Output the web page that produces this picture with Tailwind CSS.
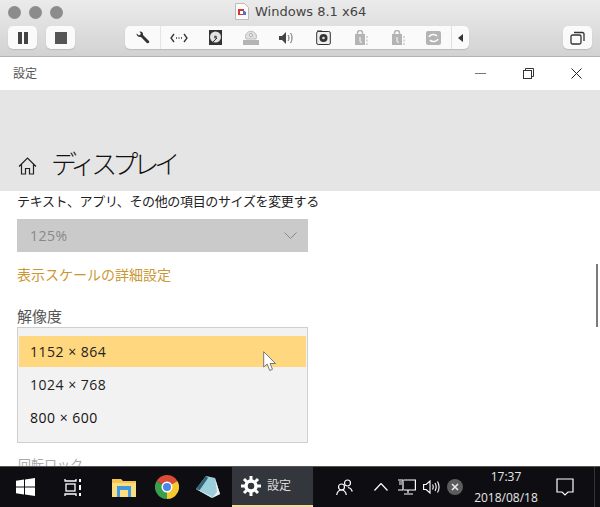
<!DOCTYPE html>
<html lang="ja">
<head>
<meta charset="UTF-8">
<title>Windows 8.1 x64</title>
<script src="https://cdn.jsdelivr.net/npm/@tailwindcss/browser@4"></script>
</head>
<body class="w-[600px] h-[507px] overflow-hidden bg-white relative font-['Open_Sans','Noto_Sans_CJK_JP',sans-serif]">

  <!-- mac toolbar -->
  <div class="h-[57px] bg-gradient-to-b from-[#ebebeb] to-[#d2d2d2] border-b border-[#b4b4b4] flex flex-col">
    <div class="h-[24px] relative flex items-center pl-[8px] gap-[8px]">
      <span class="w-[13px] h-[13px] rounded-full bg-[#8c8c8c]"></span>
      <span class="w-[13px] h-[13px] rounded-full bg-[#8c8c8c]"></span>
      <span class="w-[13px] h-[13px] rounded-full bg-[#8c8c8c]"></span>
      <div class="absolute left-[235px] top-[3px] flex items-center gap-[6px]">
        <svg width="14" height="17" viewBox="0 0 14 17"><path d="M.5.5h9l4 4v12H.5z" fill="#fafafa" stroke="#bbb"/><rect x="3" y="6" width="6" height="6" fill="#d33"/><rect x="5" y="8" width="3" height="3" fill="#fff"/><path d="M8 7l3 2v3H8z" fill="#47c"/></svg>
        <span class="font-['DejaVu_Sans'] text-[13px] leading-[17px] text-[#444]">Windows 8.1 x64</span>
      </div>
    </div>
    <div class="flex items-start pl-[8px] pt-[2px]">
      <div class="w-[29px] h-[23px] bg-[#fafafa] rounded-[5px] shadow-[0_1px_1px_#bbb] flex items-center justify-center gap-[2px]">
        <span class="w-[4px] h-[12px] bg-[#444]"></span><span class="w-[4px] h-[12px] bg-[#444]"></span>
      </div>
      <div class="ml-[9px] w-[29px] h-[23px] bg-[#fafafa] rounded-[5px] shadow-[0_1px_1px_#bbb] flex items-center justify-center">
        <span class="w-[12px] h-[12px] bg-[#555]"></span>
      </div>
      <div class="ml-[50px] w-[344px] h-[23px] bg-[#fafafa] rounded-[5px] shadow-[0_1px_1px_#bbb] flex items-center">
        <div class="w-[36px] h-full border-r border-[#e4e4e4] flex items-center justify-center">
          <svg width="16" height="16" viewBox="0 0 16 16"><path d="M1.500 3.500 4 5.500 6 4 4.500 1.500C6.500 1 8.500 2.500 8 5l6 6c1 1.500-.8 3-2.200 2L6 7C3.500 7.500 1.500 6 1.500 3.500z" fill="#333"/></svg>
        </div>
        <div class="w-[36px] flex items-center justify-center">
          <svg width="18" height="10" viewBox="0 0 18 10" fill="none" stroke="#333" stroke-width="1.300"><path d="M4 1 1 5l3 4M14 1l3 4-3 4"/><path d="M6 5h1M8.500 5h1M11 5h1"/></svg>
        </div>
        <div class="w-[36px] flex items-center justify-center">
          <svg width="13" height="15" viewBox="0 0 13 15"><rect width="13" height="15" fill="#333"/><circle cx="6.500" cy="7" r="5.500" fill="#e2e2e2"/><circle cx="6.500" cy="7" r="1.500" fill="#555"/><path d="m3 13 5-5" stroke="#333"/></svg>
        </div>
        <div class="w-[36px] flex items-center justify-center">
          <svg width="16" height="15" viewBox="0 0 16 15"><path d="M3 9a5.500 5.500 0 1 1 10 0z" fill="#e0e0e0" stroke="#bbb"/><circle cx="8" cy="5" r="1.500" fill="#fff" stroke="#aaa"/><rect y="10" width="16" height="5" fill="#b4b4b4"/></svg>
        </div>
        <div class="w-[36px] flex items-center justify-center">
          <svg width="16" height="14" viewBox="0 0 16 14"><path d="M0 5h3l4-4v12L3 9H0z" fill="#444"/><path d="M9 4c1.300 1.800 1.300 4.200 0 6M11.500 2c2 3 2 7 0 10" fill="none" stroke="#666"/></svg>
        </div>
        <div class="w-[37px] flex items-center justify-center">
          <svg width="15" height="15" viewBox="0 0 15 15"><rect x=".7" y="1.500" width="13.600" height="13" rx="1.500" fill="#eee" stroke="#333"/><path d="M1 1h5" stroke="#333"/><circle cx="7.500" cy="8" r="4" fill="#333"/><circle cx="7.500" cy="8" r="1.300" fill="#ddd"/></svg>
        </div>
        <div class="w-[36px] flex items-center justify-center pl-[3px]">
          <svg width="13" height="15" viewBox="0 0 13 15"><path d="M2.500 5V3a2.500 2.500 0 0 1 5 0v2" fill="none" stroke="#b4b4b4" stroke-width="1.500"/><rect y="4" width="10" height="11" fill="#b4b4b4"/><path d="M5 7v4c0 1.500 1 1.500 2 1" stroke="#fff" fill="none"/><path d="M12 6v2M12 9.500v2M12 13v2" stroke="#b4b4b4"/></svg>
        </div>
        <div class="w-[37px] flex items-center justify-center pl-[3px]">
          <svg width="13" height="15" viewBox="0 0 13 15"><path d="M2.500 5V3a2.500 2.500 0 0 1 5 0v2" fill="none" stroke="#b4b4b4" stroke-width="1.500"/><rect y="4" width="10" height="11" fill="#b4b4b4"/><path d="M5 7v4c0 1.500 1 1.500 2 1" stroke="#fff" fill="none"/><path d="M12 6v2M12 9.500v2M12 13v2" stroke="#b4b4b4"/></svg>
        </div>
        <div class="w-[36px] flex items-center justify-center">
          <svg width="15" height="14" viewBox="0 0 15 14"><rect width="15" height="14" rx="2" fill="#b4b4b4"/><path d="M3 6c1-3 6-3.500 8-1M12 8c-1 3-6 3.500-8 1" fill="none" stroke="#fff" stroke-width="1.500"/></svg>
        </div>
        <div class="flex-1 h-full border-l border-[#e0e0e0] flex items-center justify-center">
          <span class="w-0 h-0 border-y-[4px] border-y-transparent border-r-[5px] border-r-[#333]"></span>
        </div>
      </div>
      <div class="ml-[94px] w-[29px] h-[23px] bg-[#fafafa] rounded-[5px] shadow-[0_1px_1px_#bbb] flex items-center justify-center">
        <svg width="15" height="14" viewBox="0 0 15 14" fill="none" stroke="#333" stroke-width="1.300"><rect x="1" y="4" width="10" height="9" rx="1.500"/><path d="M4 1.500h8.500a1.500 1.500 0 0 1 1.500 1.500v7"/></svg>
      </div>
    </div>
  </div>

  <!-- settings window title -->
  <div class="h-[33px] bg-white flex items-center">
    <span class="ml-[13px] text-[12px] text-[#555]">設定</span>
    <div class="ml-auto flex items-center">
      <span class="w-[11px] h-px bg-[#777] mr-[37px]"></span>
      <svg class="mr-[37px]" width="11" height="11" viewBox="0 0 11 11" fill="none" stroke="#333"><rect x=".5" y="2.500" width="8" height="8"/><path d="M2.500 2.500v-2h8v8h-2"/></svg>
      <svg class="mr-[18px]" width="11" height="11" viewBox="0 0 11 11" fill="none" stroke="#222"><path d="m.5.500 10 10M10.500.500l-10 10"/></svg>
    </div>
  </div>

  <!-- header -->
  <div class="h-[101px] bg-[#e5e5e5] flex items-end pl-[18px]">
    <svg class="mb-[16px]" width="19" height="18" viewBox="0 0 19 18" fill="none" stroke="#222" stroke-width="1.200"><path d="M1 9.500 9.500 1 18 9.500M3.500 7.500V17h4v-5.500h4V17h4V7.500"/></svg>
    <h1 class="ml-[14px] mb-[9px] text-[26px] leading-[36px] font-light tracking-[-5px] text-[#111]">ディスプレイ</h1>
  </div>

  <!-- content -->
  <div class="h-[275px] overflow-hidden pl-[17px]">
    <p class="mt-px text-[13px] leading-[18px] text-[#222] whitespace-nowrap tracking-[-.35px]">テキスト、アプリ、その他の項目のサイズを変更する</p>
    <div class="mt-[9px] w-[291px] h-[33px] bg-[#cacaca] flex items-center pl-[13px] pr-[11px]">
      <span class="text-[14px] tracking-[.5px] text-[#888]">125%</span>
      <svg class="ml-auto" width="13" height="7" viewBox="0 0 13 7" fill="none" stroke="#888"><path d="m.5.500 6 6 6-6"/></svg>
    </div>
    <a class="block mt-[13px] text-[14px] leading-[20px] text-[#cc9733]">表示スケールの詳細設定</a>
    <p class="mt-[21px] text-[15px] leading-[20px] text-[#555]">解像度</p>
    <div class="mt-[1px] w-[291px] h-[116px] bg-[#f2f2f2] border border-[#cfcfcf] pt-[8px] px-[1px] text-[14px] tracking-[.5px] text-[#222]">
      <div class="h-[31px] bg-[#ffd77e] pl-[11px] leading-[31px]">1152 × 864</div>
      <div class="h-[35px] pl-[11px] leading-[35px]">1024 × 768</div>
      <div class="h-[32px] pl-[11px] leading-[32px] text-[#111]">800 × 600</div>
    </div>
    <p class="mt-[11px] ml-px text-[13px] leading-[20px] text-[#aaa]">回転ロック</p>
  </div>

  <!-- taskbar -->
  <div class="h-[41px] bg-[#0e0e12] border-t border-[#555] flex items-stretch text-white">
    <div class="w-[50px] flex items-center justify-center">
      <svg width="19" height="18" viewBox="0 0 19 18" fill="#fff"><path d="M0 2.700 8 1.500V8.500H0zM9 1.400 19 0v8.500H9zM0 9.500h8v7L0 15.300zM9 9.500h10V18L9 16.600z"/></svg>
    </div>
    <div class="w-[48px] flex items-center justify-center">
      <svg width="20" height="17" viewBox="0 0 20 17" fill="none" stroke="#fff" stroke-width="1.300"><path d="M1 0v2h11V0M1 17v-2h11v2"/><rect x="2" y="5" width="9" height="7"/><path d="M16 0v3M16 6v5M16 14v3" stroke-width="2"/></svg>
    </div>
    <div class="w-[52px] flex items-center justify-center">
      <svg width="24" height="20" viewBox="0 0 24 20"><path d="M0 2h9l2 2h13v16H0z" fill="#f4c453"/><path d="M0 6h24v14H0z" fill="#fbdc7e"/><path d="M5 9h14v11h-3v-7H8v7H5z" fill="#3d9ae0"/></svg>
    </div>
    <div class="w-[34px] flex items-center justify-center">
      <svg width="24" height="24" viewBox="0 0 24 24"><path d="M12 12 1.600 6A12 12 0 0 1 22.400 6z" fill="#dc4a38"/><path d="M12 12 22.400 6A12 12 0 0 1 12 24z" fill="#f7c930"/><path d="M12 12 12 24A12 12 0 0 1 1.600 6z" fill="#3a9e4c"/><circle cx="12" cy="12" r="5.500" fill="#fff"/><circle cx="12" cy="12" r="4" fill="#4a86e8"/></svg>
    </div>
    <div class="w-[48px] flex items-center justify-center">
      <svg width="24" height="23" viewBox="0 0 24 23"><path d="M10 0 19 2 24 18 16 22 0 13z" fill="#9ccfdc"/><path d="M10 0 0 13 3 15 12 2z" fill="#2f6474"/><path d="M19 2 24 18 16 22 21 16z" fill="#eeeeee"/><path d="M0 13 16 22 15 20 3 14z" fill="#d8e8ec"/></svg>
    </div>
    <div class="w-[81px] bg-[#33363c] border-b-[2px] border-[#f5d9a0] flex items-center pl-[9px] gap-[6px]">
      <svg width="20" height="20" viewBox="0 0 20 20" fill="none" stroke="#fff" stroke-width="3.500"><circle cx="10" cy="10" r="5"/><path d="M10 0v4M10 16v4M0 10h4M16 10h4M3 3l2.500 2.500M14.500 14.500 17 17M17 3l-2.500 2.500M5.500 14.500 3 17" stroke-width="3"/></svg>
      <span class="text-[12px] text-[#ddd]">設定</span>
    </div>
    <div class="ml-[23px] flex items-center">
      <svg width="17" height="17" viewBox="0 0 17 17" fill="none" stroke="#fff" stroke-width="1.200"><circle cx="5.500" cy="8" r="3"/><path d="M.7 16c.5-3 2.500-5 4.800-5s4.300 2 4.800 5"/><circle cx="11.500" cy="4" r="3"/><path d="M12 8.500c2 .3 3.500 1.500 4.300 4"/></svg>
    </div>
    <div class="ml-[21px] flex items-center">
      <svg width="14" height="8" viewBox="0 0 14 8" fill="none" stroke="#fff" stroke-width="1.200"><path d="m.5 7.500 6.500-7 6.500 7"/></svg>
    </div>
    <div class="ml-[10px] flex items-center">
      <svg width="18" height="16" viewBox="0 0 18 16" fill="none" stroke="#fff" stroke-width="1.200"><path d="M6 1h11.400v10H6M10 11v3M6 15h9M0 1h5v10H0M1 3h3M1 5h3"/></svg>
    </div>
    <div class="ml-[7px] flex items-center">
      <svg width="17" height="14" viewBox="0 0 17 14" fill="none" stroke="#fff" stroke-width="1.100"><path d="M.6 4.500h2.500L7 1v12L3.100 9.500H.6zM9.500 4.500c.9 1.500.9 3.500 0 5M12 3c1.500 2.500 1.500 5.500 0 8M14.500 1.500c2 3.500 2 7.500 0 11"/></svg>
    </div>
    <div class="ml-[7px] flex items-center">
      <svg width="16" height="16" viewBox="0 0 16 16"><circle cx="8" cy="8" r="8" fill="#5c5c5c"/><path d="m5 5 6 6M11 5l-6 6" stroke="#e8e8e8" stroke-width="1.600"/></svg>
    </div>
    <div class="w-[78px] ml-[4px] flex flex-col items-center justify-center text-[12px] leading-[21px] text-[#e8e8e8]">
      <span>17:37</span><span>2018/08/18</span>
    </div>
    <div class="ml-[11px] flex items-center">
      <svg width="18" height="18" viewBox="0 0 18 18" fill="none" stroke="#fff" stroke-width="1.200"><path d="M1 1h16v13h-5l-3 3-3-3H1z"/></svg>
    </div>
    <div class="ml-auto mr-[5px] w-px bg-[#333]"></div>
  </div>

  <!-- overlays: scrollbar thumb and mouse pointer -->
  <div class="absolute left-[596px] top-[264px] w-[2px] h-[63px] bg-[#7a7a7a]"></div>
  <svg class="absolute left-[263px] top-[351px]" width="14" height="21" viewBox="0 0 14 21"><path d="M.7.700V16l3.500-3 2.500 6.500 2.800-1.200L7 12.500h5.500z" fill="#fff" stroke="#777"/></svg>
</body>
</html>
